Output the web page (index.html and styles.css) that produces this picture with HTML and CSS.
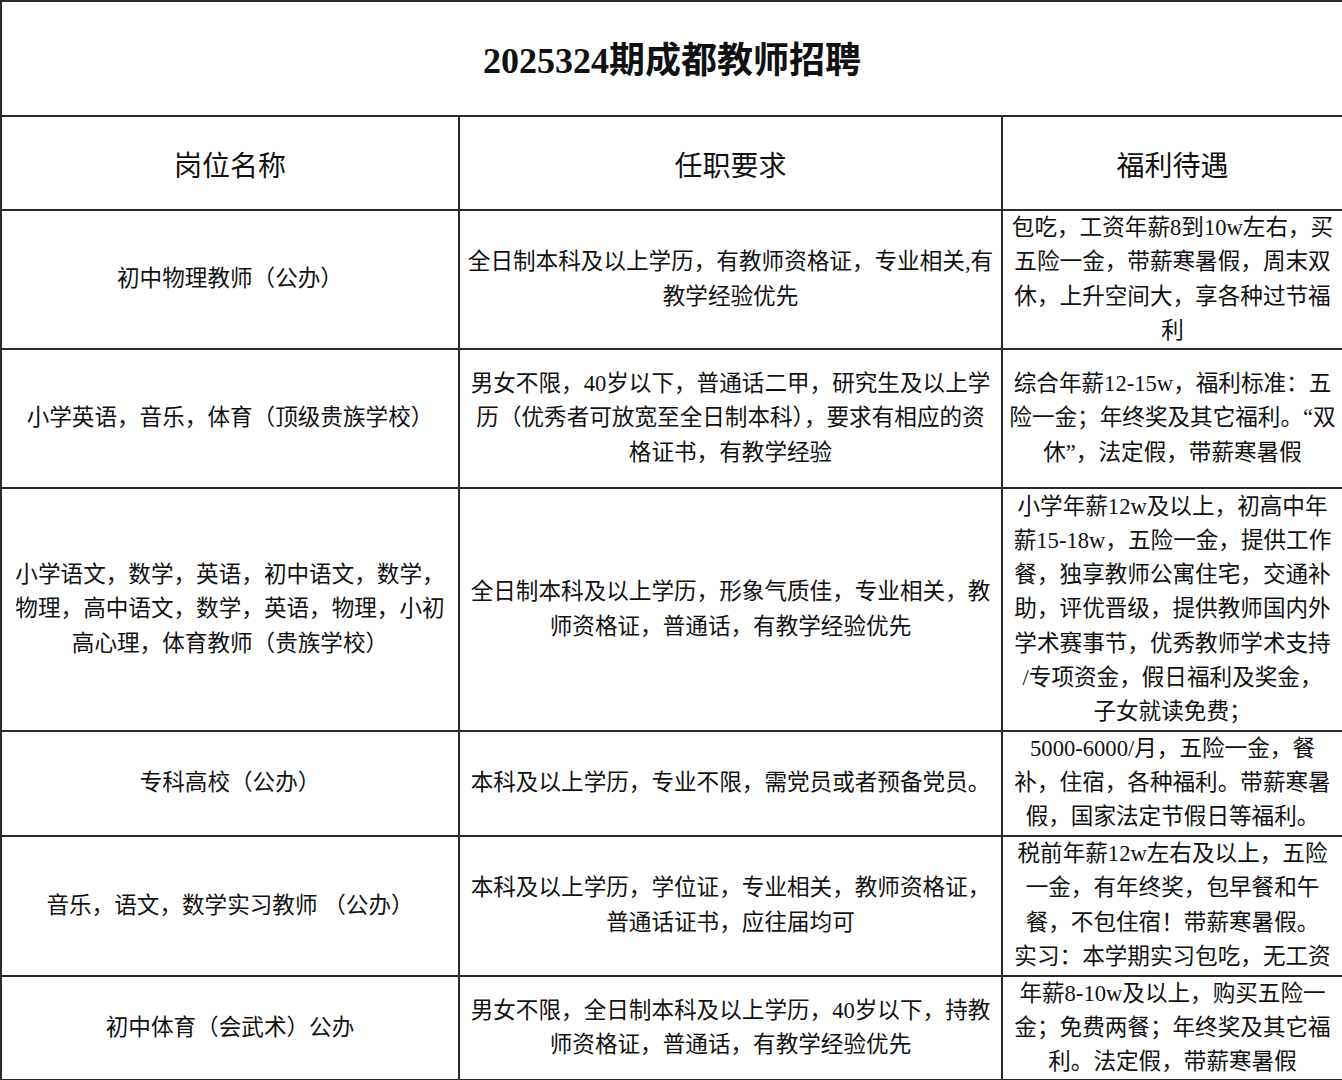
FILE: index.html
```html
<!DOCTYPE html>
<html lang="zh-CN">
<head>
<meta charset="utf-8">
<title>2025324期成都教师招聘</title>
<link rel="stylesheet" href="styles.css">
</head>
<body>
<table class="sheet">
  <colgroup>
    <col class="c1">
    <col class="c2">
    <col class="c3">
  </colgroup>
  <tr class="r-title"><td colspan="3" class="title">2025324期成都教师招聘</td></tr>
  <tr class="r-head">
    <td class="head">岗位名称</td>
    <td class="head">任职要求</td>
    <td class="head">福利待遇</td>
  </tr>
  <tr class="r1">
    <td>初中物理教师（公办）</td>
    <td>全日制本科及以上学历，有教师资格证，专业相关,有<br>教学经验优先</td>
    <td>包吃，工资年薪8到10w左右，买<br>五险一金，带薪寒暑假，周末双<br>休，上升空间大，享各种过节福<br>利</td>
  </tr>
  <tr class="r2">
    <td>小学英语，音乐，体育（顶级贵族学校）</td>
    <td>男女不限，40岁以下，普通话二甲，研究生及以上学<br>历（优秀者可放宽至全日制本科），要求有相应的资<br>格证书，有教学经验</td>
    <td>综合年薪12-15w，福利标准：五<br>险一金；年终奖及其它福利。“双<br>休”，法定假，带薪寒暑假</td>
  </tr>
  <tr class="r3">
    <td>小学语文，数学，英语，初中语文，数学，<br>物理，高中语文，数学，英语，物理，小初<br>高心理，体育教师（贵族学校）</td>
    <td>全日制本科及以上学历，形象气质佳，专业相关，教<br>师资格证，普通话，有教学经验优先</td>
    <td>小学年薪12w及以上，初高中年<br>薪15-18w，五险一金，提供工作<br>餐，独享教师公寓住宅，交通补<br>助，评优晋级，提供教师国内外<br>学术赛事节，优秀教师学术支持<br>/专项资金，假日福利及奖金，<br>子女就读免费；</td>
  </tr>
  <tr class="r4">
    <td>专科高校（公办）</td>
    <td>本科及以上学历，专业不限，需党员或者预备党员。</td>
    <td>5000-6000/月，五险一金，餐<br>补，住宿，各种福利。带薪寒暑<br>假，国家法定节假日等福利。</td>
  </tr>
  <tr class="r5">
    <td>音乐，语文，数学实习教师 （公办）</td>
    <td>本科及以上学历，学位证，专业相关，教师资格证，<br>普通话证书，应往届均可</td>
    <td>税前年薪12w左右及以上，五险<br>一金，有年终奖，包早餐和午<br>餐，不包住宿！带薪寒暑假。<br>实习：本学期实习包吃，无工资</td>
  </tr>
  <tr class="r6">
    <td>初中体育（会武术）公办</td>
    <td>男女不限，全日制本科及以上学历，40岁以下，持教<br>师资格证，普通话，有教学经验优先</td>
    <td>年薪8-10w及以上，购买五险一<br>金；免费两餐；年终奖及其它福<br>利。法定假，带薪寒暑假</td>
  </tr>
</table>
</body>
</html>
```

FILE: styles.css
```css
html, body {
  margin: 0;
  padding: 0;
  background: #ffffff;
}

body {
  font-family: "Liberation Serif", "Noto Sans CJK SC", serif;
  color: #111111;
}

.sheet {
  width: 1342px;
  border-collapse: collapse;
  table-layout: fixed;
}

.c1 { width: 458px; }
.c2 { width: 543px; }
.c3 { width: 341px; }

.sheet td {
  border: 2px solid #2b2b2b;
  padding: 0 4px;
  text-align: center;
  vertical-align: middle;
  font-size: 22.6px;
  line-height: 34.2px;
  white-space: nowrap;
  overflow: hidden;
}

.sheet td.title {
  font-size: 36px;
  font-weight: 700;
  line-height: 40px;
  padding-top: 5px;
}

.sheet td.head {
  font-size: 28px;
  line-height: 36px;
  padding-top: 7px;
}

.r-title { height: 115px; }
.r-head { height: 94px; }
.r1 { height: 139px; }
.r2 { height: 139px; }
.r3 { height: 243px; }
.r4 { height: 103px; }
.r5 { height: 140px; }
.r6 { height: 103px; }
```
